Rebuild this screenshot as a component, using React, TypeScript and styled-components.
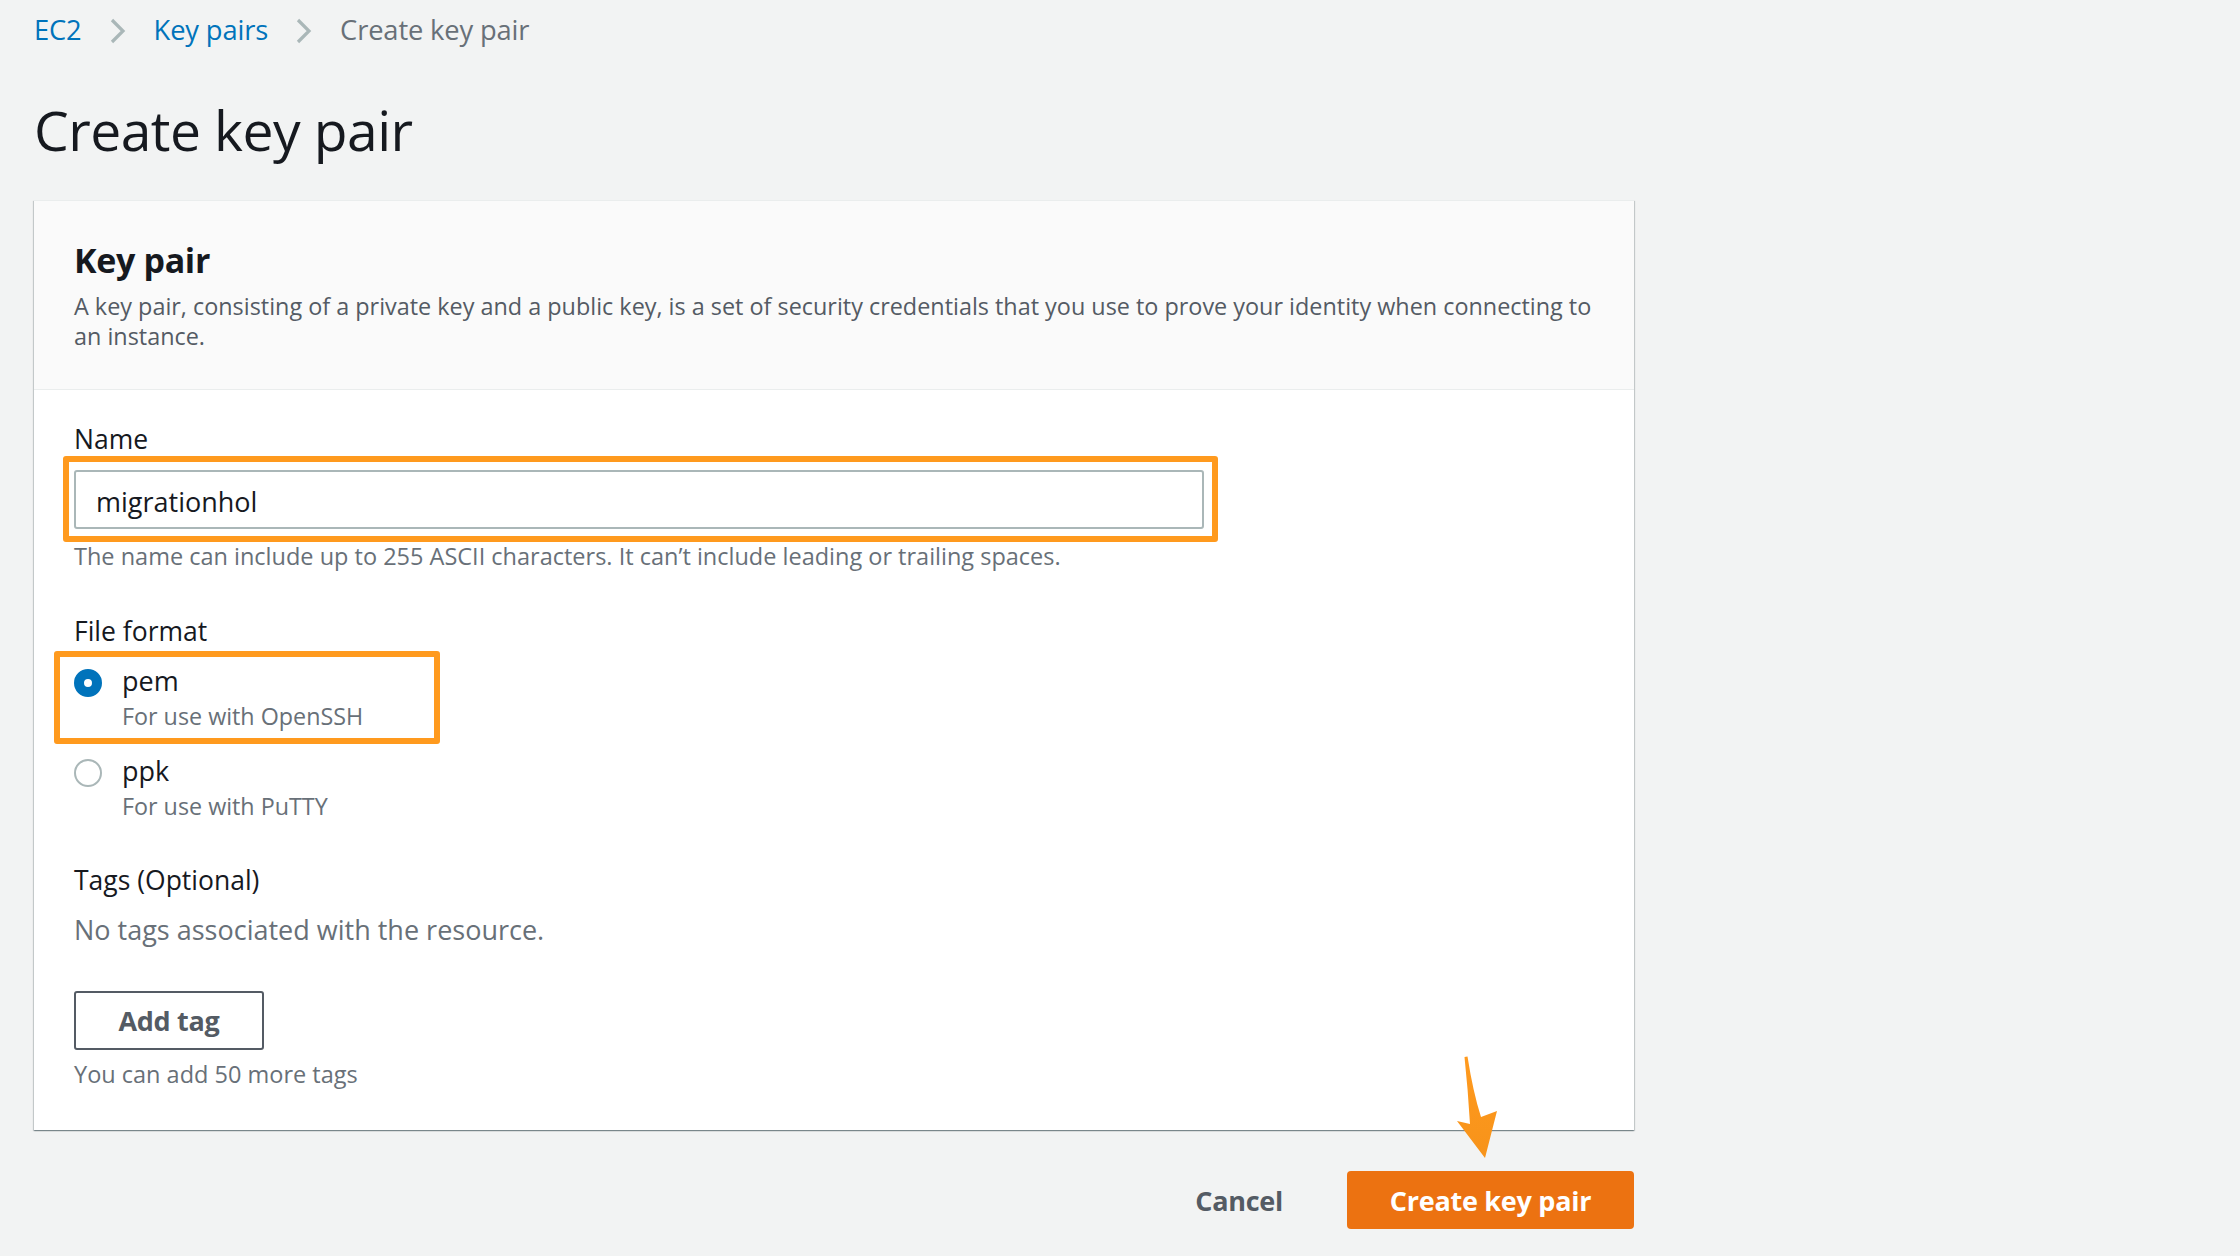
import React from "react";
import styled, { createGlobalStyle } from "styled-components";

const GlobalStyle = createGlobalStyle`
  html, body {
    margin: 0;
    padding: 0;
    background: #f2f3f3;
  }
  body {
    font-family: "Open Sans", "Noto Sans", "Liberation Sans", sans-serif;
    color: #16191f;
    -webkit-font-smoothing: antialiased;
  }
  * { box-sizing: border-box; }
`;

const Page = styled.div`
  position: relative;
  width: 2240px;
  min-height: 1256px;
  padding: 12px 0 0 34px;
`;

const Main = styled.div`
  width: 1600px;
  display: flex;
  flex-direction: column;
`;

const Breadcrumbs = styled.nav`
  display: flex;
  align-items: center;
  gap: 26px;
  font-size: 27.3px;
  line-height: 36px;
  height: 36px;
`;

const Crumb = styled.a<{ $current?: boolean }>`
  color: ${(p) => (p.$current ? "#687078" : "#0073bb")};
  text-decoration: none;
  letter-spacing: -0.005em;
`;

const Chevron = styled.svg`
  display: block;
  width: 20px;
  height: 26px;
  margin-top: 2px;
`;

const Title = styled.h1`
  margin: 50px 0 0;
  font-size: 55.2px;
  line-height: 64px;
  font-weight: 400;
  letter-spacing: -0.01em;
  color: #16191f;
`;

const Card = styled.section`
  margin-top: 38px;
  background: #ffffff;
  border-top: 1px solid #eaeded;
  box-shadow: 0 1px 1px 0 rgba(0, 28, 36, 0.3), 1px 1px 1px 0 rgba(0, 28, 36, 0.15),
    -1px 1px 1px 0 rgba(0, 28, 36, 0.15);
`;

const CardHeader = styled.header`
  background: #fafafa;
  border-bottom: 1px solid #eaeded;
  padding: 37px 40px 38px;
`;

const CardTitle = styled.h2`
  margin: 0;
  font-size: 34px;
  line-height: 44px;
  font-weight: 700;
  letter-spacing: -0.01em;
  color: #16191f;
`;

const CardDescription = styled.p`
  margin: 9px 0 0;
  font-size: 23.4px;
  line-height: 30px;
  color: #545b64;
`;

const CardBody = styled.div`
  padding: 32px 40px 41px;
  display: flex;
  flex-direction: column;
`;

const Field = styled.div<{ $gap?: number }>`
  display: flex;
  flex-direction: column;
  margin-top: ${(p) => p.$gap ?? 0}px;
`;

const Label = styled.label`
  font-size: 26.5px;
  line-height: 34px;
  color: #16191f;
`;

const Highlight = styled.div<{ $t: number; $r: number; $b: number; $l: number; $w?: number }>`
  position: relative;
  &::after {
    content: "";
    position: absolute;
    top: ${(p) => p.$t}px;
    bottom: ${(p) => p.$b}px;
    left: ${(p) => p.$l}px;
    ${(p) => (p.$w ? `width: ${p.$w}px;` : `right: ${p.$r}px;`)}
    border: 6px solid #ff9a1e;
    border-radius: 3px;
    pointer-events: none;
  }
`;

const InputWrap = styled(Highlight)`
  margin-top: 14px;
  width: 1130px;
`;

const TextInput = styled.input`
  display: block;
  width: 100%;
  height: 59px;
  border: 2px solid #aab7b8;
  border-radius: 3px;
  padding: 4px 20px 0;
  font-family: inherit;
  font-size: 27px;
  color: #16191f;
  background: #fff;
  outline: none;
`;

const Help = styled.div<{ $gap?: number }>`
  margin-top: ${(p) => p.$gap ?? 0}px;
  font-size: 23.5px;
  line-height: 30px;
  color: #687078;
`;

const RadioGroup = styled.div`
  display: flex;
  flex-direction: column;
  margin-top: 16px;
  gap: 23px;
`;

const RadioOption = styled.div`
  display: flex;
  gap: 20px;
  align-items: flex-start;
`;

const RadioDot = styled.span<{ $checked?: boolean }>`
  flex: none;
  width: 28px;
  height: 28px;
  margin-top: 5px;
  border-radius: 50%;
  background: #fff;
  border: ${(p) => (p.$checked ? "10px solid #0073bb" : "2px solid #aab7b8")};
`;

const RadioText = styled.div`
  display: flex;
  flex-direction: column;
`;

const RadioLabel = styled.div`
  font-size: 27px;
  line-height: 34px;
  color: #16191f;
`;

const RadioDesc = styled.div`
  margin-top: 3px;
  font-size: 23.3px;
  line-height: 30px;
  color: #687078;
`;

const EmptyText = styled.div`
  margin-top: 15px;
  font-size: 27px;
  line-height: 36px;
  color: #687078;
`;

const SecondaryButton = styled.button`
  margin-top: 43px;
  align-self: flex-start;
  width: 190px;
  height: 59px;
  border: 2px solid #545b64;
  border-radius: 3px;
  background: #fff;
  color: #545b64;
  font-family: inherit;
  font-size: 27px;
  font-weight: 700;
  letter-spacing: -0.01em;
  cursor: pointer;
`;

const Footer = styled.div`
  margin-top: 41px;
  display: flex;
  justify-content: flex-end;
  align-items: center;
  gap: 32px;
`;

const LinkButton = styled.button`
  height: 58px;
  padding: 0 32px;
  border: none;
  background: transparent;
  color: #545b64;
  font-family: inherit;
  font-size: 27px;
  font-weight: 700;
  letter-spacing: -0.01em;
  cursor: pointer;
`;

const PrimaryButton = styled.button`
  width: 287px;
  height: 58px;
  border: none;
  border-radius: 4px;
  background: #ec7211;
  color: #fff;
  font-family: inherit;
  font-size: 27px;
  font-weight: 700;
  letter-spacing: -0.01em;
  cursor: pointer;
`;

const Arrow = styled.svg`
  position: absolute;
  left: 1450px;
  top: 1050px;
  width: 60px;
  height: 115px;
  pointer-events: none;
`;

function ChevronIcon() {
  return (
    <Chevron viewBox="0 0 20 26" aria-hidden>
      <polyline points="4,2 15,13 4,24" fill="none" stroke="#aab7b8" strokeWidth="3.2" />
    </Chevron>
  );
}

export default function App() {
  return (
    <>
      <GlobalStyle />
      <Page>
        <Main>
          <Breadcrumbs>
            <Crumb href="#">EC2</Crumb>
            <ChevronIcon />
            <Crumb href="#">Key pairs</Crumb>
            <ChevronIcon />
            <Crumb $current>Create key pair</Crumb>
          </Breadcrumbs>

          <Title>Create key pair</Title>

          <Card>
            <CardHeader>
              <CardTitle>Key pair</CardTitle>
              <CardDescription>
                A key pair, consisting of a private key and a public key, is a set of security
                credentials that you use to prove your identity when connecting to an instance.
              </CardDescription>
            </CardHeader>
            <CardBody>
              <Field>
                <Label>Name</Label>
                <InputWrap $t={-14} $r={-14} $b={-13} $l={-11}>
                  <TextInput defaultValue="migrationhol" />
                </InputWrap>
                <Help $gap={12}>
                  The name can include up to 255 ASCII characters. It can’t include leading or
                  trailing spaces.
                </Help>
              </Field>

              <Field $gap={43}>
                <Label>File format</Label>
                <RadioGroup>
                  <Highlight $t={-13} $r={0} $b={-13} $l={-20} $w={374}>
                    <RadioOption>
                      <RadioDot $checked />
                      <RadioText>
                        <RadioLabel>pem</RadioLabel>
                        <RadioDesc>For use with OpenSSH</RadioDesc>
                      </RadioText>
                    </RadioOption>
                  </Highlight>
                  <RadioOption>
                    <RadioDot />
                    <RadioText>
                      <RadioLabel>ppk</RadioLabel>
                      <RadioDesc>For use with PuTTY</RadioDesc>
                    </RadioText>
                  </RadioOption>
                </RadioGroup>
              </Field>

              <Field $gap={42}>
                <Label>Tags (Optional)</Label>
                <EmptyText>No tags associated with the resource.</EmptyText>
                <SecondaryButton>Add tag</SecondaryButton>
                <Help $gap={9}>You can add 50 more tags</Help>
              </Field>
            </CardBody>
          </Card>

          <Footer>
            <LinkButton>Cancel</LinkButton>
            <PrimaryButton>Create key pair</PrimaryButton>
          </Footer>
        </Main>

        <Arrow viewBox="1450 1050 60 115" aria-hidden>
          <defs>
            <linearGradient id="arrowGrad" x1="0" y1="0" x2="0" y2="1">
              <stop offset="0" stopColor="#ff9a1e" />
              <stop offset="1" stopColor="#f7931a" />
            </linearGradient>
          </defs>
          <path
            d="M1464.5,1057 L1467.5,1056.5 Q1473,1092 1481,1117 L1497,1111 L1485,1158 L1457,1121 L1470,1124 Q1468,1090 1464.5,1057 Z"
            fill="url(#arrowGrad)"
          />
        </Arrow>
      </Page>
    </>
  );
}
